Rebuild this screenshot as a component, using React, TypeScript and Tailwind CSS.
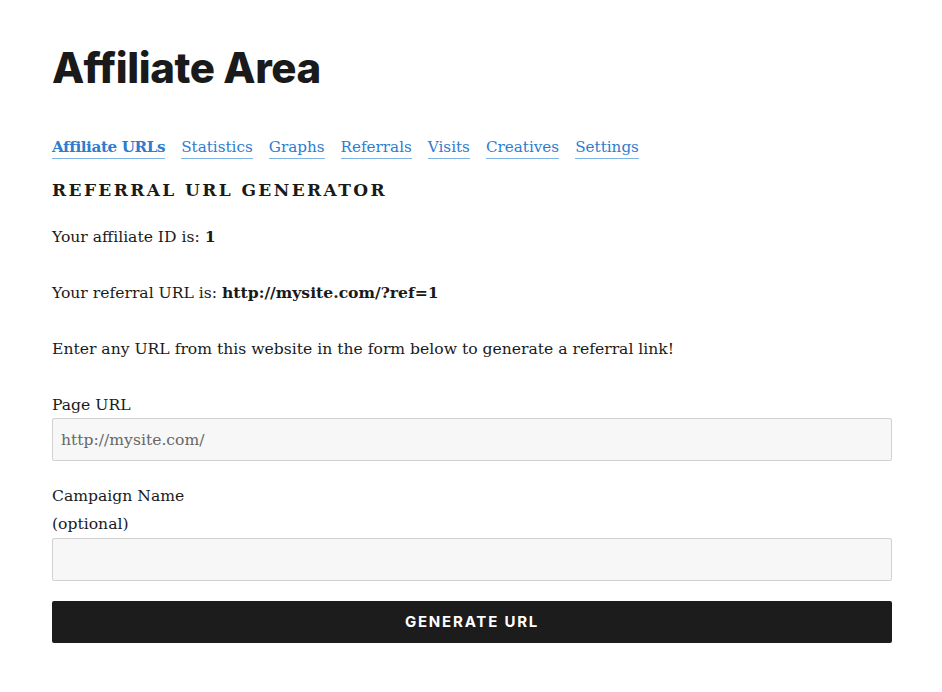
const tabs = ['Affiliate URLs', 'Statistics', 'Graphs', 'Referrals', 'Visits', 'Creatives', 'Settings']

const serif = "font-['DejaVu_Serif','Liberation_Serif',serif]"

export default function App() {
  return (
    <div className="min-h-[692px] bg-white text-[#1a1a1a]">
      <div className={`w-[840px] ml-[52px] pt-[42px] text-[15.6px] leading-[28px] ${serif}`}>
        <h1 className="font-['Inter',sans-serif] font-extrabold text-[42px] leading-[52px] tracking-[-0.4px] text-[#1a1a1a]">
          Affiliate Area
        </h1>

        <nav className="mt-[42px] flex gap-[16px] text-[15.2px]">
          {tabs.map((t, i) => (
            <a
              key={t}
              href="#"
              className={`text-[#2e7bcf] border-b border-[#7fb5e6] leading-[22px] ${i === 0 ? 'font-bold tracking-[-0.4px]' : ''}`}
            >
              {t}
            </a>
          ))}
        </nav>

        <h2 className="mt-[17px] font-bold text-[17px] tracking-[2.4px] uppercase leading-[28px]">
          Referral URL Generator
        </h2>

        <p className="mt-[19px]">
          Your affiliate ID is: <strong>1</strong>
        </p>
        <p className="mt-[28px]">
          Your referral URL is: <strong>http://mysite.com/?ref=1</strong>
        </p>
        <p className="mt-[28px]">
          Enter any URL from this website in the form below to generate a referral link!
        </p>

        <form className="mt-[28px]" onSubmit={e => e.preventDefault()}>
          <label className="block">Page URL</label>
          <input
            type="text"
            defaultValue="http://mysite.com/"
            className={`-mt-[1px] block w-full h-[43px] px-[8px] bg-[#f7f7f7] border border-[#d1d1d1] rounded-[2px] text-[#666666] text-[15.6px] outline-none ${serif}`}
          />

          <label className="block mt-[21px]">
            Campaign Name
            <br />
            (optional)
          </label>
          <input
            type="text"
            className={`block w-full h-[43px] px-[8px] bg-[#f7f7f7] border border-[#d1d1d1] rounded-[2px] outline-none ${serif}`}
          />

          <button
            type="submit"
            className="mt-[20px] w-full h-[42px] bg-[#1c1c1c] rounded-[2px] text-white font-['Inter',sans-serif] font-bold text-[15px] tracking-[1.8px] uppercase"
          >
            Generate URL
          </button>
        </form>
      </div>
    </div>
  )
}
